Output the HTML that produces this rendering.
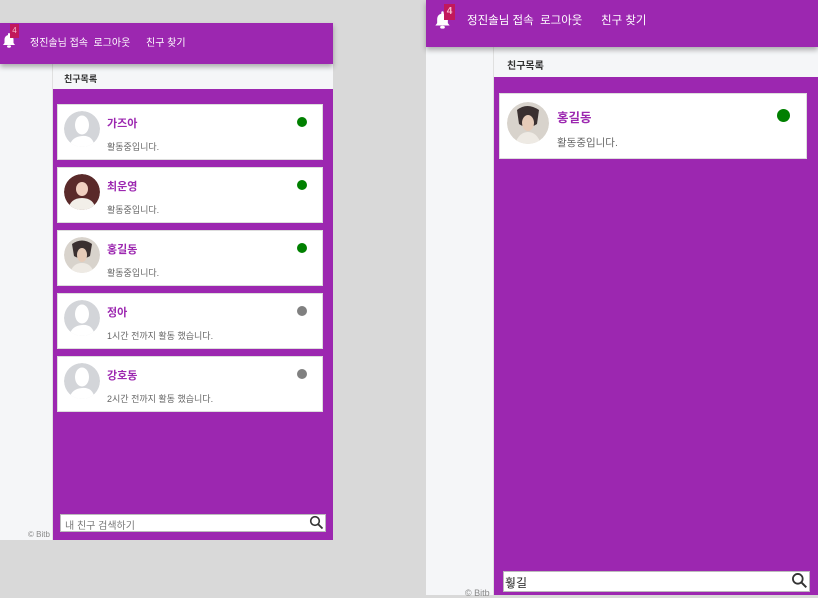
<!DOCTYPE html>
<html><head><meta charset="utf-8"><style>
*{margin:0;padding:0;box-sizing:border-box}
body{width:818px;height:595px;background:#d9d9d9;position:relative;overflow:hidden;font-family:"Liberation Sans","Noto Sans CJK KR",sans-serif}
.a{position:absolute}
.hdr{background:#9c27b0;color:#fff;box-shadow:0 3px 5px rgba(0,0,0,.3)}
.side{background:#f5f6f8;border-right:1px solid #e0e0e0}
.sub{background:#f5f6f8;color:#333;font-weight:bold}
.pur{background:#9c27b0}
.card{background:#fff;border:1px solid #ddd}
.nm{color:#9c27b0;font-weight:bold;position:absolute}
.st{color:#666;position:absolute}
.dot{position:absolute;border-radius:50%}
.srch{background:#fff;border:1px solid #bbb}
.av{border-radius:50%;overflow:hidden}
</style></head><body>
<!-- LEFT -->
<div class="a" style="left:0;top:23px;width:333px;height:517px;background:#f5f6f8"></div>
<div class="a side" style="left:0;top:64px;width:53px;height:476px"></div>
<div class="a" style="left:28px;top:530px;font-size:8px;color:#888">© Bitb</div>
<div class="a sub" style="left:53px;top:64px;width:280px;height:25px;font-size:9px;padding:8px 0 0 11px">친구목록</div>
<div class="a pur" style="left:53px;top:89px;width:280px;height:451px"></div>
<div class="a hdr" style="left:0;top:23px;width:333px;height:41px"></div>
<svg class="a" style="left:2px;top:32px" width="14" height="16" viewBox="0 0 14 16"><path d="M7 1a1 1 0 0 1 1 1v1a4.5 4.5 0 0 1 3.5 4.5V11l1.5 2H1l1.5-2V7.5A4.5 4.5 0 0 1 6 3V2a1 1 0 0 1 1-1z" fill="#fff"/><ellipse cx="7" cy="14.5" rx="2" ry="1.2" fill="#fff"/></svg>
<div class="a" style="left:10px;top:24px;width:9px;height:14px;background:#c2185b;color:#f8bbd0;font-size:8px;text-align:center;line-height:14px">4</div>
<div class="a" style="left:30px;top:34px;font-size:10px;color:#fff">정진솔님 접속&nbsp;&nbsp;로그아웃</div>
<div class="a" style="left:146px;top:34px;font-size:10px;color:#fff">친구 찾기</div>

<div id="cards"></div>
<div class="a srch" style="left:60px;top:514px;width:266px;height:18px;font-size:10px;color:#777;padding:2px 4px">내 친구 검색하기</div>
<svg class="a" style="left:309px;top:515px" width="15" height="15" viewBox="0 0 15 15"><circle cx="6" cy="6" r="4.3" fill="none" stroke="#333" stroke-width="1.6"/><path d="M9.2 9.2L13.5 13.5" stroke="#333" stroke-width="1.8"/></svg>

<!-- RIGHT -->
<div class="a" style="left:426px;top:0;width:392px;height:595px;background:#f5f6f8"></div>
<div class="a side" style="left:426px;top:47px;width:68px;height:548px"></div>
<div class="a" style="left:465px;top:588px;font-size:9px;color:#888">© Bitb</div>
<div class="a sub" style="left:494px;top:47px;width:324px;height:30px;font-size:10px;padding:10px 0 0 13px">친구목록</div>
<div class="a pur" style="left:494px;top:77px;width:324px;height:518px"></div>
<div class="a hdr" style="left:426px;top:0;width:392px;height:47px"></div>
<svg class="a" style="left:434px;top:10px" width="17" height="19" viewBox="0 0 14 16"><path d="M7 1a1 1 0 0 1 1 1v1a4.5 4.5 0 0 1 3.5 4.5V11l1.5 2H1l1.5-2V7.5A4.5 4.5 0 0 1 6 3V2a1 1 0 0 1 1-1z" fill="#fff"/><ellipse cx="7" cy="14.5" rx="2" ry="1.2" fill="#fff"/></svg>
<div class="a" style="left:444px;top:4px;width:11px;height:16px;background:#c2185b;color:#f8bbd0;font-size:10px;font-weight:bold;text-align:center;line-height:16px">4</div>
<div class="a" style="left:467px;top:12px;font-size:11.5px;color:#fff">정진솔님 접속&nbsp;&nbsp;로그아웃</div>
<div class="a" style="left:601px;top:12px;font-size:11.5px;color:#fff">친구 찾기</div>
<div class="a card" style="left:499px;top:93px;width:308px;height:66px"></div>
<svg class="a av" style="left:507px;top:102px" width="42" height="42"><circle cx="21" cy="21" r="21" fill="#d8d3cc"/><path d="M10 8q10-8 22 0l-2 14q-9 6-18 0z" fill="#3a3030"/><path d="M8 42q4-12 13-12t13 12z" fill="#eeeae4"/><ellipse cx="21" cy="21" rx="6" ry="8" fill="#e6cbb8"/></svg>
<div class="nm" style="left:557px;top:107px;font-size:12.5px">홍길동</div>
<div class="st" style="left:557px;top:135px;font-size:10.5px">활동중입니다.</div>
<div class="dot" style="left:777px;top:109px;width:13px;height:13px;background:#008000"></div>
<div class="a srch" style="left:503px;top:571px;width:307px;height:21px;font-size:12px;color:#222;padding:2px 1px">훻길</div>
<svg class="a" style="left:791px;top:572px" width="17" height="17" viewBox="0 0 15 15"><circle cx="6" cy="6" r="4.3" fill="none" stroke="#333" stroke-width="1.6"/><path d="M9.2 9.2L13.5 13.5" stroke="#333" stroke-width="1.8"/></svg>

<script>
var d=[["가즈아","활동중입니다.","#008000",0],["최운영","활동중입니다.","#008000",1],["홍길동","활동중입니다.","#008000",2],["정아","1시간 전까지 활동 했습니다.","#808080",0],["강호동","2시간 전까지 활동 했습니다.","#808080",0]];
var h="";
d.forEach(function(c,i){var y=104+i*63;
var av=c[3]==0?'<circle cx="18" cy="18" r="18" fill="#d3d5d9"/><ellipse cx="18" cy="14" rx="7" ry="9.5" fill="#fff"/><path d="M5 38q1-12 13-13t13 13z" fill="#fff"/>'
:c[3]==1?'<circle cx="18" cy="18" r="18" fill="#5a2a2a"/><path d="M4 36q2-12 14-12t14 12z" fill="#f2efe9"/><ellipse cx="18" cy="15" rx="6" ry="7" fill="#f0cfc0"/>'
:'<circle cx="18" cy="18" r="18" fill="#d8d3cc"/><path d="M8 7q10-7 20 0l-2 12q-8 5-16 0z" fill="#3a3030"/><path d="M6 36q3-10 12-10t12 10z" fill="#eeeae4"/><ellipse cx="18" cy="18" rx="5" ry="7" fill="#e6cbb8"/>';
h+='<div class="a card" style="left:57px;top:'+y+'px;width:266px;height:56px"></div>'+
'<svg class="a av" style="left:64px;top:'+(y+7)+'px" width="36" height="36">'+av+'</svg>'+
'<div class="nm" style="left:107px;top:'+(y+11)+'px;font-size:11px">'+c[0]+'</div>'+
'<div class="st" style="left:107px;top:'+(y+36)+'px;font-size:9px">'+c[1]+'</div>'+
'<div class="dot" style="left:297px;top:'+(y+13)+'px;width:10px;height:10px;background:'+c[2]+'"></div>';});
document.getElementById("cards").outerHTML=h;
</script>
</body></html>
